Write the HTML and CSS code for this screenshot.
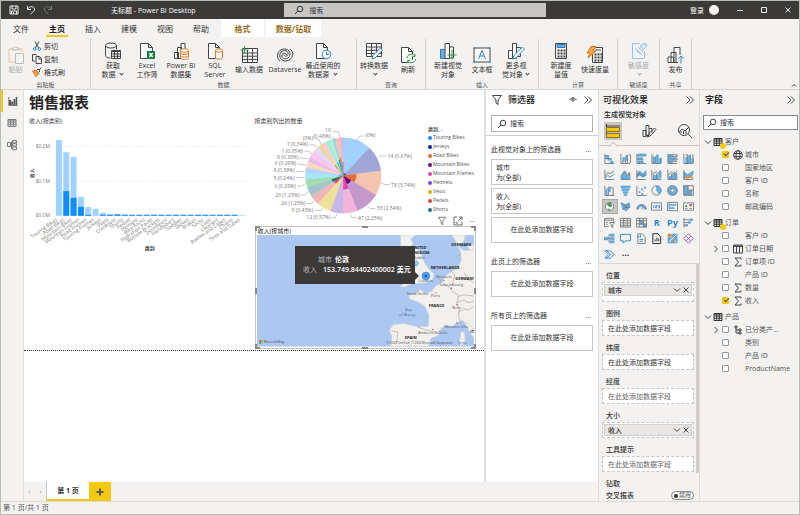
FILE: index.html
```html
<!DOCTYPE html>
<html lang="zh-CN">
<head>
<meta charset="utf-8">
<title>无标题 - Power BI Desktop</title>
<link rel="stylesheet" href="styles.css">
</head>
<body>
<svg class="sprite" aria-hidden="true">
  <symbol id="lens" viewBox="0 0 10 10"><circle cx="6" cy="4" r="2.8"/><path d="M4 6 1 9"/></symbol>
  <symbol id="down" viewBox="0 0 8 8"><path d="M1 2.5 4 5.5 7 2.5"/></symbol>
  <symbol id="right" viewBox="0 0 8 8"><path d="M2.5 1 5.5 4 2.5 7"/></symbol>
  <symbol id="close" viewBox="0 0 8 8"><path d="M1.5 1.5l5 5M6.5 1.5l-5 5"/></symbol>
  <symbol id="expand" viewBox="0 0 10 10"><path d="M1.500 1.500 5 5 1.500 8.500M5 1.500 8.500 5 5 8.500"/></symbol>
  <symbol id="funnel" viewBox="0 0 12 12"><path d="M1.500 1.500h9L7 6v4.500L5 9V6z"/></symbol>
  <symbol id="table" viewBox="0 0 10 10"><path d="M1 1.500h8v7H1zM1 4h8M1 6.200h8M3.700 1.500v7M6.300 1.500v7M1 2h8"/></symbol>
  <symbol id="sum" viewBox="0 0 10 10"><path d="M8 2.500V1H2l3.500 4L2 9h6V7.500"/></symbol>
</svg>

<header class="titlebar">
  <div class="title-left">
    <button class="plain" aria-label="保存"><svg class="i10" viewBox="0 0 10 10"><path d="M1 1h8v8H1zM3 1v3h4V1M2.500 9V6h5v3M4.500 7v2"/></svg></button>
    <button class="plain" aria-label="撤消"><svg class="i10" viewBox="0 0 10 10"><path d="M1.500 1v3.500H5M1.500 4.500C3 1 8 .5 8.500 4 8.700 6 7 7 4.500 9"/></svg></button>
    <button class="plain dim" aria-label="恢复"><svg class="i10" viewBox="0 0 10 10"><path d="M8.500 1v3.500H5M8.500 4.500C7 1 2 .5 1.500 4 1.300 6 3 7 5.500 9"/></svg></button>
    <span class="doc-title">无标题 - Power BI Desktop</span>
  </div>
  <label class="top-search"><svg class="i10"><use href="#lens"/></svg><input type="text" placeholder="搜索" aria-label="搜索"></label>
  <div class="title-right">
    <button class="plain sign">登录<span class="avatar"></span></button>
    <button class="plain" aria-label="最小化"><svg class="i8" viewBox="0 0 8 8"><path d="M1 4.500h6"/></svg></button>
    <button class="plain" aria-label="最大化"><svg class="i8" viewBox="0 0 8 8"><path d="M1.500 1.500h5v5h-5z"/></svg></button>
    <button class="plain" aria-label="关闭"><svg class="i8"><use href="#close"/></svg></button>
  </div>
</header>

<nav class="tabs">
  <button>文件</button><button class="active">主页</button><button>插入</button><button>建模</button><button>视图</button><button>帮助</button><button class="context">格式</button><button class="context long">数据/钻取</button>
</nav>

<section class="ribbon">
  <div class="group clip">
    <div class="tools">
      <button class="tool paste"><svg viewBox="0 0 18 18"><path class="or" d="M5 3H2v13h6M12 3h3v3"/><path d="M5 4V2h2c0-1.500 3-1.500 3 0h2v2zM8.500 7.500h8v10h-8z"/></svg>粘贴</button>
      <div class="small-tools">
        <button><svg class="i10" viewBox="0 0 10 10"><path d="M3 .5 6.700 7M7 .5 3.300 7"/><g class="bl"><circle cx="2.700" cy="8" r="1.300"/><circle cx="7.300" cy="8" r="1.300"/></g></svg>剪切</button>
        <button><svg class="i10" viewBox="0 0 10 10"><path d="M3 7H.5V.5H4l1 1M4 2.500h3.500l2 2v5H4zM7 2.500V5h2.500"/></svg>复制</button>
        <button><svg class="i10" viewBox="0 0 10 10"><path class="fo" d="M.5 4 4 3l3 3.500L4 9.500z"/><path d="M4.500 3.500 6 2l2 2-1.500 1.500M7 3l2.500-2.500"/></svg>格式刷</button>
      </div>
    </div>
    <span class="caption">剪贴板</span>
  </div>
  <div class="group">
    <div class="tools inset">
      <button class="tool"><svg viewBox="0 0 18 18"><ellipse cx="7" cy="3.500" rx="5.500" ry="2.500"/><path d="M1.500 3.500v10c0 1.500 2 2.500 5 2.500M12.500 3.500V7"/><path class="w" d="M7.500 8.500h9v8h-9z"/><path d="M7.500 9.500h9M7.500 12h9M7.500 14.300h9M10.500 9v7.500M13.500 9v7.500"/></svg>获取<br>数据 <i class="caret"></i></button>
      <button class="tool"><svg viewBox="0 0 18 18"><path class="w" d="M2.500 1.500h8l4 4v11h-12zM10.500 1.500v4h4"/><path class="fg" d="M9 9h8v8H9z"/><path class="ws" d="M11.300 11l3.500 4M14.800 11l-3.500 4"/></svg>Excel<br>工作簿</button>
      <button class="tool"><svg viewBox="0 0 18 18"><path class="w" d="M2.500 10.500h4v6h-4zM5.500 5.500h4v11h-4zM9 1.500h4v12H9z"/><g class="or w"><path d="M8.500 8.500v7c0 2.500 8 2.500 8 0v-7"/><ellipse cx="12.500" cy="8.500" rx="4" ry="1.800"/><path d="M8.500 11c0 2 8 2 8 0M8.500 13.500c0 2 8 2 8 0"/></g></svg>Power BI<br>数据集</button>
      <button class="tool"><svg viewBox="0 0 18 18"><path class="w" d="M2.500 1.500h7l4 4v11h-11zM9.500 1.500v4h4"/><g class="or w"><path d="M9.500 8.500v7c0 2.300 7 2.300 7 0v-7"/><ellipse cx="13" cy="8.500" rx="3.500" ry="1.700"/></g></svg>SQL<br>Server</button>
      <button class="tool"><svg viewBox="0 0 18 18"><path class="w" d="M2.500 2.500h15v14h-15zM2.500 7h15M2.500 10.200h15M2.500 13.400h15M7.500 4v12.500M12.500 2.500v14"/><path class="gr" d="M4.500 0v8M.5 4h8"/></svg>输入数据</button>
      <button class="tool wide"><svg viewBox="0 0 18 18"><path d="M4 15C-1 11 2 3 8 3c6-.5 8 6 4 9-3 2-7 0-6-3 .5-2 4-2.500 4.500 0M14 3c5 3 3 11-4 12-5 .5-8-5-5-9 3-3 8-1 7 2.500-.5 2.500-4 2-4 0"/></svg>Dataverse</button>
      <button class="tool wide"><svg viewBox="0 0 18 18"><path class="w" d="M2.500 1.500h7l4 4v11h-11zM9.500 1.500v4h4"/><g class="bl w"><circle cx="12.500" cy="12.500" r="4.300"/><path d="M12.500 9.500v3h3"/></g></svg>最近使用的<br>数据源 <i class="caret"></i></button>
    </div>
    <span class="caption">数据</span>
  </div>
  <div class="group">
    <div class="tools">
      <button class="tool"><svg viewBox="0 0 18 18"><path class="w" d="M1.500 1.500h15v13h-15zM1.500 5h15M1.500 8.300h15M1.500 11.500h15M6.500 1.500v13M11.500 1.500v13"/><path class="bl w" d="M7 17l1-3.500L15.500 6l2 2L10 16z"/></svg>转换数据<br><i class="caret"></i></button>
      <button class="tool"><svg viewBox="0 0 18 18"><path class="w" d="M2.500 1.500h7l4 4v11h-11zM9.500 1.500v4h4"/><path class="gr w" d="M8 12c0-4 6-5 8-2M16 8v2.500h-2.500M16.500 13c0 4-6 5-8 2M8.500 17v-2.500H11"/></svg>刷新</button>
    </div>
    <span class="caption">查询</span>
  </div>
  <div class="group">
    <div class="tools inset">
      <button class="tool"><svg viewBox="0 0 18 18"><path class="fb" d="M1.500 7.500h5v9h-5z"/><path class="w" d="M6 1.500h4.500v15H6zM10.500 5h4v11h-4z"/><path class="gr" d="M13 8v9.500M8.500 13h9"/></svg>新建视觉<br>对象</button>
      <button class="tool"><svg viewBox="0 0 18 18"><path class="w" d="M1 2h16v14H1z"/><path class="bl" d="M5.500 13 9 4.500 12.500 13M6.700 10h4.600M0 2h2M16 2h2M0 16h2M16 16h2"/></svg>文本框</button>
      <button class="tool"><svg viewBox="0 0 18 18"><path class="w" d="M1.500 8.500h4v8h-4zM5.500 1.500h4v15h-4zM9.500 5.500h4v9h-4z"/><path class="bl w" d="M6 17l1-3.500L15.500 5l2 2L9 16z"/></svg>更多视<br>觉对象<i class="caret"></i></button>
    </div>
    <span class="caption">插入</span>
  </div>
  <div class="group">
    <div class="tools">
      <button class="tool"><svg viewBox="0 0 18 18"><path class="w" d="M3.500 1.500h11v15h-11z"/><path class="fb" d="M5 2.500h8v3H5z"/><path class="dot" d="M5.500 8.500h8M5.500 11.500h8M5.500 14.500h8"/></svg>新建度<br>量值</button>
      <button class="tool"><svg viewBox="0 0 18 18"><path class="w" d="M6.500 1.500h10v15h-10z"/><path class="dot" d="M8.500 8.500h8M8.500 11.500h8M8.500 14.500h8"/><path d="M9 4h6"/><path class="fo" d="M5 .5h5L7 5h3L2 12l2-5H1z"/></svg>快速度量</button>
    </div>
    <span class="caption">计算</span>
  </div>
  <div class="group">
    <div class="tools">
      <button class="tool off"><svg viewBox="0 0 18 18"><path d="M10 1.500H2.500v15h12V9"/><path d="M8 5l5 5M6 8l4 4M5 6l7 7M10 4l5-3 2 3-4 4zM11 6l5-4"/></svg>敏感度<br><i class="caret"></i></button>
    </div>
    <span class="caption">敏感度</span>
  </div>
  <div class="group">
    <div class="tools">
      <button class="tool"><svg viewBox="0 0 18 18"><path class="w" d="M7 1.500h6v15H7zM4 6.500h5v10H4zM1 11h5.500v5.500H1z"/><path class="w none" d="M11 9h7v9h-7z"/><path class="bl" d="M14 17.500V10M11.500 12.500 14 10l2.500 2.500"/></svg>发布</button>
    </div>
    <span class="caption">共享</span>
  </div>
  <button class="plain collapse" aria-label="折叠功能区"><svg class="i8" viewBox="0 0 8 8"><path d="M2 5.500 4 3.500 6 5.500"/></svg></button>
</section>

<main class="workspace">
  <nav class="rail">
    <button class="on" aria-label="报表"><svg class="i10" viewBox="0 0 10 10"><path class="fd" d="M1 4h2v5H1zM3.300 5.500h1.800V9H3.300zM5.500 3h1.800v6H5.500zM7.700 1h1.500v8H7.700z"/><path d="M.8 1v8.500h8.700"/></svg></button>
    <button aria-label="数据"><svg class="i10"><use href="#table"/></svg></button>
    <button aria-label="模型"><svg class="i10" viewBox="0 0 10 10"><path d="M5.500.5h4v2.500h-4zM5.500 3.700h4v2.300h-4zM5.500 7h4v2.500h-4zM.5 2.500h3v4h-3zM3.500 4.500h2M4.500 2v6.500h1M4.500 2h1"/></svg></button>
  </nav>

  <div class="work">
    <div class="stage">
      <div class="report">
        <h1>销售报表</h1>
        <div class="visuals">
          <section class="visual">
            <h2>收入(按类别)</h2>
            <svg id="bars" class="chart" viewBox="84 105 666 380"></svg>
          </section>
          <div class="stack">
            <section class="visual">
              <h2>按类别列出的数量</h2>
              <div class="pie-row">
                <svg id="pie" class="chart" viewBox="30 108 515 286"></svg>
                <div class="legend">
                  <b>类别_ .</b>
                  <ul id="legend"></ul>
                </div>
              </div>
            </section>
            <section class="visual map-visual">
              <div class="visual-actions">
                <button class="plain" aria-label="筛选器"><svg class="i10"><use href="#funnel"/></svg></button>
                <button class="plain" aria-label="焦点模式"><svg class="i10" viewBox="0 0 10 10"><path d="M4 1H1v8h8V6M5 5l4-4M6 1h3v3M3 6v1h2"/></svg></button>
                <button class="plain" aria-label="更多选项">···</button>
              </div>
              <div class="map-frame">
                <h2>收入(按城市)</h2>
                <svg class="chart map" viewBox="32 45 658 337">
                  <path class="sea" d="M32 45h658v337H32z"/>
                  <path class="land" d="M466 45h46l-14 12 6 14-8 12 22 4 14 22 8 22 14 18 14 14-4 16-16 10-24 2-26 2-20 10-12-2 20-20-6-10 10-20-10-30-14-30z"/>
                  <path class="land" d="M622 45h40l-4 18-14 18 14 12 32-6v244l-24-14-12-14-16 6-14 12-26-1-12 12-6 18-22 8-6 24H436l4-30-8-18 12-18 34-3 44 10 28-2 2-34-12-26-18-12-28-10-4-12 24-4 6-12 12 2 8 10 20-8 12-16 20-10 12-22 20-14 16-8 10-24-4-30z"/>
                  <path class="land" d="M650 336l10 4 2 28-12 14-6-16zM668 78l18-6 4 14-14 6zM660 310l14 4 16 22v24l-14-20z"/>
                  <path class="border" d="M582 176l14 18 18 8 10 14 18 12-6 26 8 16-2 20 6 24M518 324l26 8 32 8 14 4M614 150l16 14-6 34M636 110l14-8M636 250l20-8 18 8 16-6M640 280l18-12 14 4 18-12M640 232l16-6 34 4M438 335l20 4-4 34M660 160l10 20 20 10"/>
                  <g class="country"><text x="522" y="88">UNITED</text><text x="524" y="103">KINGDOM</text><text x="650" y="77">DENMARK</text><text x="601" y="147">NETHERLANDS</text><text x="662" y="181">GERMANY</text><text x="575" y="263">FRANCE</text><text x="497" y="360">SPAIN</text><text x="683" y="340">IT</text></g>
                  <g class="city"><text x="522" y="119">Dublin</text><text x="543" y="188">London</text><text x="598" y="174">Brussels</text><text x="620" y="200">Luxembourg</text><text x="518" y="228">Saint-Helier</text><text x="572" y="234">Paris</text><text x="636" y="270">Bern</text><text x="636" y="325">Monaco-Ville</text><text x="564" y="345">Andorra la Vella</text></g>
                  <g class="water"><text x="490" y="275">Bay</text><text x="486" y="289">of Biscay</text></g>
                  <g class="pins"><circle cx="598" cy="183" r="2"/><circle cx="620" cy="206" r="2"/><circle cx="519" cy="214" r="2"/><circle cx="573" cy="220" r="2"/><circle cx="637" cy="256" r="2"/><circle cx="637" cy="311" r="2"/><circle cx="564" cy="331" r="2"/></g>
                  <circle class="bubble light" cx="512" cy="131" r="8"/><circle class="bubble" cx="543" cy="169" r="12"/><circle class="bubble-core" cx="543" cy="169" r="4"/>
                  <path fill="#f25022" stroke="none" d="M39 363h5v5h-5z"/><path fill="#7fba00" stroke="none" d="M45 363h5v5h-5z"/><path fill="#00a4ef" stroke="none" d="M39 369h5v5h-5z"/><path fill="#ffb900" stroke="none" d="M45 369h5v5h-5z"/>
                  <text class="credit" x="53" y="373">Microsoft Bing</text>
                  <text class="credit" x="424" y="376">© 2022 TomTom, © 2022 Microsoft Corporation</text><text class="credit link" x="640" y="376">Terms</text>
                </svg>
                <i class="handle tl"></i><i class="handle tc"></i><i class="handle tr"></i><i class="handle ml"></i><i class="handle mr"></i><i class="handle bl-h"></i><i class="handle bc"></i><i class="handle br"></i>
                <div class="tooltip"><p class="indent"><span>城市</span><b>伦敦</b></p><p><span>收入</span><b>153.749.84402400002 美元</b></p></div>
              </div>
            </section>
          </div>
        </div>
      </div>

      <aside class="filters">
        <div class="pane-head"><svg class="i12 dark"><use href="#funnel"/></svg><h2>筛选器</h2><button class="plain push" aria-label="显示"><svg class="i10" viewBox="0 0 10 10"><path d="M1.500 5c2-3 5-3 7 0"/><circle cx="5" cy="5" r="1.200"/></svg></button><button class="plain" aria-label="折叠"><svg class="i10"><use href="#expand"/></svg></button></div>
        <label class="search"><svg class="i10"><use href="#lens"/></svg><input type="text" placeholder="搜索" aria-label="搜索筛选器"></label>
        <section class="filter-set first"><h3>此视觉对象上的筛选器<button class="plain">...</button></h3><div class="card">城市<br>为(全部)</div><div class="card">收入<br>为(全部)</div><div class="card drop">在此处添加数据字段</div></section>
        <section class="filter-set"><h3>此页上的筛选器<button class="plain">...</button></h3><div class="card drop">在此处添加数据字段</div></section>
        <section class="filter-set"><h3>所有页上的筛选器<button class="plain">...</button></h3><div class="card drop">在此处添加数据字段</div></section>
      </aside>
    </div>
    <footer class="pages"><button class="arrow" aria-label="上一页">‹</button><button class="arrow" aria-label="下一页">›</button><button class="page">第 1 页</button><button class="add" aria-label="新建页"><svg class="i10" viewBox="0 0 10 10"><path d="M5 1.500v7M1.500 5h7"/></svg></button></footer>
  </div>

  <aside class="viz">
    <div class="pane-head"><h2>可视化效果</h2><button class="plain push" aria-label="折叠"><svg class="i10"><use href="#expand"/></svg></button></div>
    <h3 class="build">生成视觉对象</h3>
    <div class="modes">
      <button class="on" aria-label="字段"><svg viewBox="0 0 16 16"><path d="M1.500 1v14M1 3h14"/><path class="fy" d="M1.500 4.500h13v4h-13zM1.500 10.500h13v4h-13z"/></svg></button>
      <button aria-label="格式"><svg viewBox="0 0 16 16"><path d="M2 7.500h3v6H2zM5 2.500h3v10H5zM8 5.500h3v4M6 14l1.500-3L13.500 5l1.500 1.500L9 13z"/></svg></button>
      <button aria-label="分析"><svg viewBox="0 0 16 16"><circle cx="7" cy="7" r="5.500"/><path d="M11 11l4 4M2 9l3-3 3 2 4-4M4 10V8M6.500 11V8M9 11V8"/></svg></button>
    </div>
    <div class="gallery">
      <button aria-label="堆积条形图"><svg viewBox="0 0 12 12"><path d="M1 1v10.500h10M1 3h4v2M1 6h7v2"/><path class="b" d="M2 3h3v2H2zM4 6h3v2H4zM7 9h3v2H7z"/></svg></button>
      <button aria-label="堆积柱形图"><svg viewBox="0 0 12 12"><path d="M1 1v10.500h10M9.500 2h2v9"/><path class="b" d="M3 5h2v4H3zM6 3h2v5H6z"/><path d="M3 9v2M6 8v3M8 2v9"/></svg></button>
      <button aria-label="簇状条形图"><svg viewBox="0 0 12 12"><path d="M1 1v10.500h10M1 3h10M1 7h7"/><path class="b" d="M2 1h9v2H2zM2 5h5v2H2zM2 8.500h6v2H2z"/></svg></button>
      <button aria-label="簇状柱形图"><svg viewBox="0 0 12 12"><path d="M1 1v10.500h10M5 4v7M11 5v6"/><path class="b" d="M2 4h2v7H2zM6 2h2v9H6zM9 6h2v5H9z"/></svg></button>
      <button aria-label="百分比堆积条形图"><svg viewBox="0 0 12 12"><path d="M1 1v10.500h10M1 2h10v2H1M1 5.500h10v2H1M1 9h10"/><path class="b" d="M2 2h4v2H2zM2 5.500h7v2H2zM2 9h4v2H2z"/></svg></button>
      <button aria-label="百分比堆积柱形图"><svg viewBox="0 0 12 12"><path d="M1 1v10.500h10M3 2h2v9M7 2h1v9M10 2h1v9"/><path class="b" d="M3 5h2v6H3zM6 3h2v8H6zM9.500 6h1.500v5H9.500z"/></svg></button>
      <button aria-label="折线图"><svg viewBox="0 0 12 12"><path d="M1 1v10.500h10M1 8l3-4 3 1 4-3"/><path class="s" d="M1 10l3-3 3 2 4-4"/></svg></button>
      <button aria-label="面积图"><svg viewBox="0 0 12 12"><path class="b" d="M1 11V8l4-5 3 5 2-3 1 6z"/><path d="M1 11.500h10M1 8l4-6 3 5 2-3 1 4"/></svg></button>
      <button aria-label="堆积面积图"><svg viewBox="0 0 12 12"><path class="b" d="M1 9V5l3-3 3 3 4-3v5L8 9 4 7z"/><path d="M1 1v10.500h10M1 7l3-2 3 3 4-3"/></svg></button>
      <button aria-label="折线和堆积柱形图"><svg viewBox="0 0 12 12"><path d="M1 1v10.500h10M3 6v5M6 5v6M10 1v10M2 5l4-2 4 3"/><path class="b" d="M3 7h2v4H3zM6 6h2v5H6zM9 3h2v6H9z"/></svg></button>
      <button aria-label="折线和簇状柱形图"><svg viewBox="0 0 12 12"><path d="M1 1v10.500h10M5 5v6M8 3v8M1 7l4-4 3 3 3-4"/><path class="b" d="M2 8h2v3H2zM5 6h2v5H5zM9 5h2v6H9z"/></svg></button>
      <button aria-label="功能区图"><svg viewBox="0 0 12 12"><path class="b" d="M1 3l4 3 3-2 3-2v4L8 9 5 8 1 11z"/><path class="o" d="M1 7l4 2 3-3 3 3v2L8 9l-3 2-4-2z"/><path d="M1 1v10.500h10"/></svg></button>
      <button aria-label="瀑布图"><svg viewBox="0 0 12 12"><path d="M1 1v10.500h10M3 4h2v7M7 3h3v8H8"/><path class="b" d="M2 5h1.500v6H2zM5 2h2v5H5z"/></svg></button>
      <button aria-label="漏斗图"><svg viewBox="0 0 12 12"><path class="b" d="M1 1h10v2H1zM2 4h8v2H2zM3.500 7h5v2h-5zM4.500 10h3v1.500h-3z"/></svg></button>
      <button aria-label="散点图"><svg viewBox="0 0 12 12"><path d="M1 1v10.500h10M4 4h.5M8 7h.5"/><path class="b" d="M3 7h1.500v1.500H3zM6 4h1.500v1.500H6zM9 2h1.500v1.500H9zM6 9h1.500v1.500H6z"/></svg></button>
      <button aria-label="饼图"><svg viewBox="0 0 12 12"><circle cx="6" cy="6" r="5"/><path class="b" d="M6 6V1a5 5 0 0 1 3 9z"/></svg></button>
      <button aria-label="圆环图"><svg viewBox="0 0 12 12"><circle class="ring" cx="6" cy="6" r="3.800"/><circle cx="6" cy="6" r="5.300"/><circle class="hole" cx="6" cy="6" r="2"/></svg></button>
      <button aria-label="树状图"><svg viewBox="0 0 12 12"><path class="b" d="M1 1h4v10H1zM6 6h3v5H6z"/><path d="M.8.800h10.400v10.400H.8zM5.500 1v10M5.500 5.500H11M9 5.500V11"/></svg></button>
      <button class="on" aria-label="地图"><svg viewBox="0 0 12 12"><circle class="w" cx="6" cy="6" r="4.500"/><path class="e" d="M3 3l4-1 2 3-2 2-3-2zM4 8l3 1-1 2z"/></svg></button>
      <button aria-label="着色地图"><svg viewBox="0 0 12 12"><path class="b" d="M1 2l4 2 5-2 1 4-4 5-4-2z"/><path d="M1 2l4 2 1 3 4-5M6 7l5 0M3 9l3-2"/></svg></button>
      <button aria-label="仪表"><svg viewBox="0 0 12 12"><path class="b" d="M1 9a5 5 0 0 1 10 0H9a3 3 0 0 0-6 0z"/><path d="M1 9a5 5 0 0 1 10 0M6 9l2-3"/></svg></button>
      <button aria-label="卡片图"><svg viewBox="0 0 12 12"><path class="w" d="M.5 2h11v8H.5z"/><path class="s" d="M3 4.500v3M5 4.500h1.500v1.500H5v1.500h1.500M8 4.500h1.500v3H8M8 6h1.500"/></svg></button>
      <button aria-label="多行卡"><svg viewBox="0 0 12 12"><path class="w" d="M.5 1.500h11v9H.5z"/><path class="b" d="M2 3h1v6H2zM4 3.500h6V5H4zM4 7h4v1.500H4z"/></svg></button>
      <button aria-label="KPI"><svg viewBox="0 0 12 12"><path class="w" d="M.5 2h11v8H.5z"/><path class="e" d="M2 6.500l1.500-3L5 6.500z"/><path class="r" d="M6.500 3.500h4l-2 3z"/><path d="M2 8h3M7 8h3"/></svg></button>
      <button aria-label="切片器"><svg viewBox="0 0 12 12"><path d="M5 10.500H.500v-9h10V5M.5 3.500h10M2 6h2M2 8h2M6 6h5.500L9.500 8.500v3l-1.500-1v-2z"/></svg></button>
      <button aria-label="表"><svg viewBox="0 0 12 12"><path class="w" d="M.5 1.500h11v9.500H.5zM.5 4h11M.5 6.500h11M.5 9h11M4 1.500V11M8 1.500V11"/></svg></button>
      <button aria-label="矩阵"><svg viewBox="0 0 12 12"><path class="b" d="M4 4h4v4H4zM8 8h3v3H8z"/><path d="M.5 1.500h11v9.500H.5zM.5 4h11M.5 7.500h11M4 1.500V11M8 1.500V11"/></svg></button>
      <button class="word" aria-label="R 脚本">R</button>
      <button class="word" aria-label="Python">Py</button>
      <button aria-label="关键影响因素"><svg viewBox="0 0 12 12"><path d="M1 1v10.500M1 3h10M1 6h7M1 9h4"/><path class="b" d="M8 2h2v2H8zM6 5h2v2H6zM3 8h2v2H3z"/></svg></button>
      <button aria-label="分解树"><svg viewBox="0 0 12 12"><path class="b" d="M0 4.500h4v3H0zM7 1h4v2.500H7zM7 4.800h4v2.500H7zM7 8.500h4V11H7z"/><path d="M4 6h3M5.500 2v8H7M5.500 2H7"/></svg></button>
      <button aria-label="问答"><svg viewBox="0 0 12 12"><path class="s" d="M.5 1.500h11v7H6L3.500 11V8.500h-3z"/></svg></button>
      <button aria-label="智能叙述"><svg viewBox="0 0 12 12"><path d="M2 1h5l3 3v7.500H2z"/><path class="s" d="M4 7h4M4 9h3M1 4h3M5 2v3"/></svg></button>
      <button aria-label="分页报表"><svg viewBox="0 0 12 12"><path class="k" d="M2 .8h5.500L10.500 4v7.500H2zM4.500 9V7M6.500 9V5M8.500 9V6"/></svg></button>
      <button aria-label="ArcGIS"><svg viewBox="0 0 12 12"><path class="b" d="M1 5h4V1h6v10H1z"/><path class="wl" d="M2 10l8-8M5 5l5 5"/><circle class="o" cx="2.500" cy="2.500" r="2"/><circle class="o" cx="7" cy="8" r="1.500"/></svg></button>
      <button aria-label="Power Apps"><svg viewBox="0 0 12 12"><path class="p" d="M6 .8 11.200 6 6 11.200.8 6zM3.500 3.500l5 5M8.500 3.500l-5 5"/></svg></button>
      <button aria-label="Power Automate"><svg viewBox="0 0 12 12"><path class="s" d="M1 2h6l4 4-4 4H1l4-4zM3 2l4 4-4 4"/></svg></button>
      <button class="more" aria-label="更多">···</button>
    </div>
    <div class="wells">
      <section><h3>位置</h3><div class="well full"><div class="pill">城市<svg class="i8"><use href="#down"/></svg><svg class="i8"><use href="#close"/></svg></div></div></section>
      <section><h3>图例</h3><div class="well">在此处添加数据字段</div></section>
      <section><h3>纬度</h3><div class="well">在此处添加数据字段</div></section>
      <section><h3>经度</h3><div class="well soft">在此处添加数据字段</div></section>
      <section><h3>大小</h3><div class="well"><div class="pill">收入<svg class="i8"><use href="#down"/></svg><svg class="i8"><use href="#close"/></svg></div></div></section>
      <section><h3>工具提示</h3><div class="well soft">在此处添加数据字段</div></section>
      <section><h3>钻取</h3><label class="cross">交叉报表<span class="switch"><input type="checkbox">禁用</span></label></section>
    </div>
  </aside>

  <aside class="fields">
    <div class="pane-head"><h2>字段</h2><button class="plain push" aria-label="折叠"><svg class="i10"><use href="#expand"/></svg></button></div>
    <label class="search"><svg class="i10"><use href="#lens"/></svg><input type="text" placeholder="搜索" aria-label="搜索字段"></label>
    <section class="entity used"><h3><svg class="i8"><use href="#down"/></svg><span class="tbl"><svg class="i10"><use href="#table"/></svg></span>客户</h3>
      <label><i></i><input type="checkbox" checked><svg class="i10" viewBox="0 0 10 10"><circle cx="5" cy="5" r="4.300"/><ellipse cx="5" cy="5" rx="2" ry="4.300"/><path d="M1 3.500h8M1 6.500h8"/></svg>城市</label>
      <label><i></i><input type="checkbox"><i class="type"></i>国家地区</label>
      <label><i></i><input type="checkbox"><i class="type"></i>客户 ID</label>
      <label><i></i><input type="checkbox"><i class="type"></i>名称</label>
      <label><i></i><input type="checkbox"><i class="type"></i>邮政编码</label></section>
    <section class="entity used"><h3><svg class="i8"><use href="#down"/></svg><span class="tbl"><svg class="i10"><use href="#table"/></svg></span>订单</h3>
      <label><i></i><input type="checkbox"><i class="type"></i>客户 ID</label>
      <label><svg class="i8"><use href="#right"/></svg><input type="checkbox"><svg class="i10" viewBox="0 0 10 10"><path d="M.5 1h9v8h-9zM.5 2.500h9M3.500 3v6M6.500 3v6M.5 2h9"/></svg>订单日期</label>
      <label><i></i><input type="checkbox"><svg class="i10"><use href="#sum"/></svg>订单项 ID</label>
      <label><i></i><input type="checkbox"><i class="type"></i>产品 ID</label>
      <label><i></i><input type="checkbox"><svg class="i10"><use href="#sum"/></svg>数量</label>
      <label><i></i><input type="checkbox" checked><svg class="i10"><use href="#sum"/></svg>收入</label></section>
    <section class="entity"><h3><svg class="i8"><use href="#down"/></svg><span class="tbl"><svg class="i10"><use href="#table"/></svg></span>产品</h3>
      <label><svg class="i8"><use href="#right"/></svg><input type="checkbox"><svg class="i10" viewBox="0 0 10 10"><path d="M2 1h2v2H2zM3 3v5h3M3 5h3M6 4h2v2H6zM6 7h2v2H6z"/></svg>已分类产...</label>
      <label><i></i><input type="checkbox"><i class="type"></i>类别</label>
      <label><i></i><input type="checkbox"><i class="type"></i>产品 ID</label>
      <label><i></i><input type="checkbox"><i class="type"></i>ProductName</label></section>
  </aside>
</main>
<footer class="status">第 1 页/共 1 页</footer>
<script src="charts.js"></script>
</body>
</html>
```
FILE: styles.css
```css
* { box-sizing: border-box; margin: 0; padding: 0; }
body {
  display: flex; flex-direction: column; min-height: 100vh;
  border: 1px solid #b9bdb9; background: #f3f2f1; color: #333;
  font: 7px/9px "Open Sans", "Noto Sans CJK SC", sans-serif;
}
button, input { font: inherit; color: inherit; border: 0; background: none; }
button { white-space: nowrap; }
h1, h2, h3 { font-size: 7px; font-weight: 400; }
ul { list-style: none; }
i { font-style: normal; }
svg { display: block; flex: none; fill: none; stroke: #444; stroke-width: 1; }
svg text { stroke: none; }
.sprite { width: 0; height: 0; position: absolute; }
.i8 { width: 8px; height: 8px; }
.i10 { width: 10px; height: 10px; }
.i12 { width: 12px; height: 12px; }
.plain { display: flex; align-items: center; justify-content: center; }

.titlebar { display: grid; grid-template-columns: 284fr 262fr 254fr; align-items: center; height: 18px; background: #3b3a39; color: #fff; }
.titlebar svg { stroke: #eee; }
.title-left { display: flex; align-items: center; gap: 7px; padding-left: 8px; }
.title-left .dim { opacity: .35; }
.doc-title { margin-left: 51px; white-space: nowrap; }
.top-search { display: flex; align-items: center; gap: 5px; height: 14px; padding-left: 10px; background: #c8c6c4; }
.top-search svg { stroke: #333; }
input[type="text"] { flex: 1; min-width: 0; outline: 0; }
input::placeholder { color: #33384f; opacity: 1; }
.title-right { display: flex; align-items: center; justify-content: flex-end; gap: 16px; padding-right: 7px; }
.sign { gap: 5px; margin-right: 1px; }
.avatar { width: 10px; height: 10px; border-radius: 50%; background: #f3f2f1; }

.tabs { display: flex; height: 18px; padding-left: 2px; font-size: 8px; }
.tabs button { width: 36px; position: relative; }
.tabs .active { font-weight: 700; color: #222; }
.tabs .active::after { content: ""; position: absolute; left: 7px; right: 7px; bottom: 0; height: 2px; background: #f2c811; }
.tabs .context { width: 43px; margin-left: 2px; background: #fff; color: #96701d; font-weight: 700; }
.tabs .long { width: 55px; }

.ribbon { display: grid; grid-template-columns: 90px 266px 69px 113px 79px 42px 32px 1fr; height: 53px; padding-top: 2px; border-bottom: 1px solid #d8d6d4; }
.group { display: flex; flex-direction: column; justify-content: space-between; border-right: 1px solid #d2d0ce; }
.tools { display: flex; justify-content: center; align-items: flex-start; }
.tools.inset { justify-content: flex-start; padding-left: 5px; }
.tool { display: block; width: 34px; height: 40px; text-align: center; line-height: 9px; }
.tool.wide { width: 38px; }
.tool svg { width: 18px; height: 18px; margin: 2px auto 1px; }
.caption { text-align: center; font-size: 6px; line-height: 7px; color: #555; }
.caret { display: inline-block; width: 3px; height: 3px; margin: 0 1px 2px 3px; border: solid #444; border-width: 0 1px 1px 0; transform: rotate(45deg); }
.clip .tools { justify-content: flex-start; gap: 2px; }
.tool.paste { width: 29px; color: #aaa; }
.tool.paste svg { stroke: #bbb; margin-bottom: 1px; }
.paste .or { stroke: #efc49a; }
.small-tools { display: flex; flex-direction: column; gap: 3px; padding-top: 2px; }
.small-tools button { display: flex; align-items: center; gap: 2px; height: 10px; }
.w { fill: #faf9f8; }
.none { stroke: none; fill: #f3f2f1; }
.or { stroke: #e07a26; }
.bl { stroke: #2b88d8; }
.gr { stroke: #2e9e4f; }
.fg { fill: #107c41; stroke: none; }
.ws { stroke: #fff; stroke-width: 1.5; }
.fo { fill: #f6a540; stroke: #d9731a; }
.fb { fill: #69afe5; stroke: #2b7cc0; }
.fd { fill: #555; stroke: none; }
.dot { stroke-dasharray: 2 1; stroke-width: 2; }
.off { color: #aaa; }
.off svg { stroke: #94c4e8; }
.off .caret { border-color: #aaa; }
.collapse { place-self: end; margin-right: 1px; }

.workspace { flex: 1; display: grid; grid-template-columns: 23px 1fr 102px 99px; }
.rail { display: flex; flex-direction: column; border-right: 1px solid #e1dfdd; }
.rail button { display: flex; align-items: center; justify-content: center; height: 22px; }
.rail svg { stroke: #777; }
.rail .on { border-left: 2px solid #f2c811; }
.work { display: flex; flex-direction: column; min-width: 0; }
.stage { flex: 1; display: grid; grid-template-columns: 1fr 112px; background: #fff; }
.report { border-right: 2px solid #e1dfdd; min-width: 0; }
.report h1 { padding: 1px 0 0 5px; font-size: 15px; line-height: 22px; font-weight: 700; color: #252423; }
.visuals { display: grid; grid-template-columns: 1fr 1fr; gap: 4px; padding: 2px 8px 1px 5px; border-bottom: 1px dotted #333; }
.visual h2 { font-size: 6px; line-height: 9px; padding-top: 2px; color: #444; }
.chart { width: 100%; height: auto; }
.stack { display: flex; flex-direction: column; min-width: 0; }
.stack .visual { position: relative; }
.pie-row { display: flex; }
.pie-row .chart { flex: 1; min-width: 0; }
.legend { width: 48px; font-size: 5px; color: #555; }
.legend b { display: block; line-height: 7px; }
.legend li { display: flex; align-items: center; gap: 1px; line-height: 9px; white-space: nowrap; }
.legend li::before { content: ""; width: 4px; height: 4px; border-radius: 50%; background: var(--c); }
.axis, .callout { font-size: 15px; fill: #777; }
.axis.dark { fill: #444; font-weight: 700; }
.tick { font-size: 15px; fill: #777; text-anchor: end; }
.grid-line { stroke: #ccc; stroke-dasharray: 2 5; stroke-width: 2; }
.leader { stroke: #aaa; stroke-width: 2; }
.visual-actions { position: absolute; right: 1px; top: -10px; display: flex; gap: 6px; }
.visual-actions svg { stroke: #666; }
.map-frame { position: relative; padding: 0 1px 1px; border: 1px solid #c8c6c4; background: #fff; }
.visual.map-visual { margin-top: 4px; }
.map-frame h2 { padding-top: 0; line-height: 8px; padding-left: 1px; color: #222; }
.sea { fill: #abc7f2; stroke: none; }
.land { fill: #f1f0ec; stroke: #c9d0d6; stroke-width: 2; }
.border { stroke: #aaa5a5; stroke-width: 2; }
.country, .city, .water { text-anchor: middle; font-size: 12px; }
.country { font-weight: 700; fill: #222; }
.city { fill: #555; }
.water { fill: #3f68a8; }
.pins { fill: #e33; stroke: none; }
.bubble { fill: #2b8af0; stroke: #1b70cc; fill-opacity: .8; }
.bubble.light { fill: #8cc4f5; }
.bubble-core { fill: #0a5cc0; stroke: none; }
.credit { font-size: 9px; fill: #444; }
.credit.link { fill: #3f68a8; }
.handle { position: absolute; width: 5px; height: 5px; border: 0 solid #8a8886; }
.tl { left: -1px; top: -1px; border-width: 2px 0 0 2px; }
.tr { right: -1px; top: -1px; border-width: 2px 2px 0 0; }
.bl-h { left: -1px; bottom: -1px; border-width: 0 0 2px 2px; }
.br { right: -1px; bottom: -1px; border-width: 0 2px 2px 0; }
.tc, .bc { left: 50%; width: 6px; height: 2px; margin-left: -3px; background: #8a8886; }
.tc { top: -1px; }
.bc { bottom: -1px; }
.ml, .mr { top: 50%; width: 2px; height: 6px; background: #8a8886; }
.ml { left: -1px; }
.mr { right: -1px; }
.tooltip { position: absolute; left: 18%; top: 19px; width: 120px; padding: 9px 4px 9px 8px; background: #3b3a39; color: #fff; white-space: nowrap; }
.tooltip p { display: flex; gap: 6px; line-height: 10px; }
.tooltip .indent { padding-left: 15px; gap: 3px; }
.tooltip span { color: #bbb; }
.tooltip b { font-weight: 600; }
.tooltip::after { content: ""; position: absolute; left: 100%; top: 26px; border: 4px solid transparent; border-left-color: #3b3a39; border-right-width: 0; }

.pane-head { display: flex; align-items: center; height: 20px; }
.pane-head h2 { font-size: 9px; line-height: 12px; font-weight: 500; color: #222; }
.push { margin-left: auto; }
.search { display: flex; align-items: center; gap: 3px; height: 17px; padding-left: 5px; border: 1px solid #b3b0ad; background: #fff; }
.filters { padding: 0 5px; }
.filters .pane-head { gap: 5px; }
.filters .search { margin-top: 5px; }
.filter-set { display: flex; flex-direction: column; gap: 3px; margin-top: 8px; }
.filter-set h3 { display: flex; justify-content: space-between; align-items: center; height: 20px; padding-right: 2px; margin-bottom: -3px; }
.filter-set.first { margin: 3px -5px 0; padding: 3px 5px 0; border-top: 1px solid #d2d0ce; }
.card { height: 26px; padding: 3px 4px; border: 1px solid #c8c6c4; background: #fff; line-height: 10px; }
.card.drop { display: flex; align-items: center; justify-content: center; }

.pages { display: flex; height: 19px; }
.arrow { width: 11px; color: #999; }
.page { width: 43px; background: #fff; border-left: 1px solid #c8c6c4; border-bottom: 2px solid #f2c811; font-weight: 700; }
.add { display: grid; place-items: center; width: 22px; background: #f2c811; }
.add svg { stroke: #5c5a55; stroke-width: 2; }

.viz { display: flex; flex-direction: column; border: solid #dddbd9; border-width: 0 1px; }
.viz .pane-head { padding: 0 4px; }
.build { padding-left: 5px; line-height: 10px; font-weight: 500; color: #222; }
.modes { display: flex; justify-content: space-between; height: 26px; padding: 2px 5px 0; border-bottom: 1px solid #c8c6c4; }
.modes button { display: grid; place-items: center; width: 18px; height: 18px; position: relative; }
.modes svg { width: 16px; height: 16px; }
.modes .on { background: #c8c6c4; }
.modes .on::after { content: ""; position: absolute; top: 21px; left: 6px; width: 6px; height: 6px; border: solid #c8c6c4; border-width: 1px 0 0 1px; background: #f3f2f1; transform: rotate(45deg); }
.fy { fill: #f2c811; stroke: #8b721a; }
.gallery { display: grid; grid-template-columns: repeat(6, 1fr); grid-auto-rows: 15px; row-gap: 1px; padding: 5px 3px 1px; border-bottom: 1px solid #d8d6d4; }
.gallery button { display: grid; place-items: center; }
.gallery svg { width: 11px; height: 11px; stroke: #777; }
.gallery .on { background: #c8c6c4; outline: 1px solid #aaa; outline-offset: -1px; }
.b { fill: #62b0e6; stroke: #3d90cc; stroke-width: .5; }
.s { stroke: #2b88d8; }
.ring { stroke: #62b0e6; stroke-width: 3; }
.hole { fill: #f3f2f1; }
.o { fill: #e08a3c; stroke: none; }
.e { fill: #3d9958; stroke: none; }
.r { fill: #d13438; stroke: none; }
.k { stroke: #222; }
.wl { stroke: #fff; }
.p { stroke: #a05cb5; }
.gallery .word { font-size: 9px; font-weight: 700; color: #2b88d8; }
.gallery .more { font-size: 9px; font-weight: 700; }
.wells { padding: 0 2px 0 3px; border: solid transparent; border-width: 0 3px 0 0; border-image: linear-gradient(#d0cecc 88%, #f3f2f1 88%) 1; }
.wells h3 { height: 18px; padding: 7px 0 0 4px; font-weight: 500; }
.well { display: flex; align-items: center; height: 16px; padding-left: 5px; border: 1px dashed #c8c6c4; background: #fff; }
.well.full { height: 20px; align-items: flex-start; }
.well.soft { color: #666; }
.well:has(.pill) { padding: 1px; }
.pill { display: flex; align-items: center; flex: 1; gap: 1px; height: 12px; padding: 0 1px 0 3px; border: 1px solid #d2d0ce; background: #e8e6e4; font-weight: 500; }
.pill svg:first-of-type { margin-left: auto; }
.cross { display: flex; align-items: center; justify-content: space-between; padding-left: 4px; height: 11px; font-weight: 500; }
.switch { display: flex; align-items: center; gap: 1px; height: 9px; padding: 0 2px; border: 1px solid #888; border-radius: 5px; font-size: 6px; color: #777; }
.switch input { appearance: none; width: 4px; height: 4px; border-radius: 50%; background: #333; }

.fields .pane-head { padding: 0 3px 0 5px; }
.fields .pane-head h2 { font-weight: 700; }
.fields .search { margin: 5px 1px 5px 3px; height: 15px; padding-left: 3px; border-color: #888; }
.entity { margin-bottom: 3px; color: #555; }
.entity h3, .entity label { display: flex; align-items: center; height: 13px; white-space: nowrap; }
.entity h3 { padding-left: 4px; gap: 1px; }
.entity h3 .tbl { position: relative; margin-right: 1px; }
.tbl svg { stroke: #333; }
.used .tbl::after { content: ""; position: absolute; right: -3px; bottom: -2px; width: 6px; height: 6px; border-radius: 50%; background: #f2c811; }
.entity label { padding-left: 12px; gap: 2px; }
.entity label > i:first-child { width: 8px; }
.entity .type { width: 10px; }
.entity label svg:nth-child(3), .entity .type { margin: 0 0 0 2px; }
.entity input { appearance: none; width: 7px; height: 7px; border: 1px solid #999; border-radius: 1px; background: #fff; position: relative; }
.entity input:checked { border-color: #f2c811; background: #f2c811; }
.entity input:checked::before { content: ""; position: absolute; left: 1px; top: 0; width: 4px; height: 2px; border: solid #555; border-width: 0 0 1px 1px; transform: rotate(-45deg); }

.status { height: 13px; padding-left: 2px; line-height: 12px; border-top: 1px solid #dddbd9; color: #555; }
```
FILE: charts.js
```js
const NS = "http://www.w3.org/2000/svg";
function add(parent, tag, attrs, text) {
  const el = document.createElementNS(NS, tag);
  for (const key in attrs) el.setAttribute(key, attrs[key]);
  if (text) el.textContent = text;
  parent.appendChild(el);
}

// Column chart: [category, total height, highlighted height]
const bars = document.getElementById("bars");
const categories = [
  ["Touring Bikes", 228, 0], ["Road Bikes", 191, 74], ["Mountain Bikes", 177, 54], ["Mountain Frames", 57, 27],
  ["Road Frames", 26, 3], ["Touring Frames", 21, 0], ["Jerseys", 9, 3], ["Vests", 5, 3], ["Cranksets", 5, 4],
  ["Shorts", 4, 3], ["Pedals", 3, 3], ["Helmets", 3, 3], ["Bike Racks", 3, 3], ["Hydration Packs", 3, 3],
  ["Bottom Brackets", 3, 3], ["Derailleurs", 3, 3], ["Handlebars", 3, 3], ["Saddles", 3, 3], ["Gloves", 3, 3],
  ["Brakes", 3, 3], ["Socks", 3, 3], ["Caps", 3, 3], ["Cleaners", 3, 3], ["Bottles and Cages", 3, 3],
  ["Chains", 3, 3], ["Tires and Tubes", 2, 0]
];
[["$0.2M", 167], ["$0.1M", 271], ["$0.0M", 375]].forEach(([label, y]) => {
  add(bars, "path", { class: "grid-line", d: `M155 ${y}H738` });
  add(bars, "text", { class: "tick", x: 147, y: y + 5 }, label);
});
categories.forEach(([name, total, lit], i) => {
  const x = 165 + i * 22;
  add(bars, "rect", { x, y: 375 - total, width: 18, height: total, fill: "#a0d1ff", stroke: "none" });
  add(bars, "rect", { x, y: 375 - lit, width: 18, height: lit, fill: "#118dff", stroke: "none" });
  add(bars, "text", { class: "tick", transform: `translate(${x + 5} 389) rotate(-35)` }, name);
});
add(bars, "text", { class: "axis dark", x: 432, y: 478 }, "类别");
add(bars, "text", { class: "axis dark", transform: "translate(98 262) rotate(-90)" }, "收入");

// Pie chart: [end angle, colour, highlighted radius]
const pie = document.getElementById("pie");
const slices = [
  [43, "#118dff", 8], [83, "#12239e", 8], [121, "#e66c37", 39], [158, "#6b007b", 28], [180, "#e044a7", 42],
  [200, "#744ec2", 6], [222, "#d9b300", 8], [237, "#d64550", 32], [252, "#197278", 36], [264, "#1aab40", 10],
  [273, "#15c6f4", 14], [282, "#4092ff", 10], [291, "#ffa058", 12], [299, "#be5dc9", 8], [310, "#f472d0", 8],
  [318, "#b5a1ff", 12], [324, "#c4a200", 38], [332, "#ff8080", 14], [339, "#00dbbc", 42], [343, "#5bd667", 20],
  [348, "#0091d5", 47], [353, "#ff6b18", 54], [357, "#e044a7", 30], [360, "#744ec2", 40]
];
function wedge(from, to, r) {
  const at = a => `${(292 + r * Math.sin(a * Math.PI / 180)).toFixed(1)} ${(255 - r * Math.cos(a * Math.PI / 180)).toFixed(1)}`;
  return `M292 255L${at(from)}A${r} ${r} 0 0 1 ${at(to)}z`;
}
let start = 0;
slices.forEach(([end, fill]) => {
  add(pie, "path", { d: wedge(start, end, 113), fill, "fill-opacity": .4, stroke: "none" });
  start = end;
});
start = 0;
slices.forEach(([end, fill, r]) => {
  add(pie, "path", { d: wedge(start, end, r), fill, stroke: "none" });
  start = end;
});
[
  [358, 142, "(0%)", "start", "M333 148l8-10h12"], [424, 203, "14 (0.67%)", "start", "M396 197h24"],
  [434, 288, "78 (3.74%)", "start", "M404 277l12 5h14"], [392, 358, "53 (2.54%)", "start", "M362 345l10 8h15"],
  [336, 386, "47 (2.25%)", "start", "M313 369l5 11h14"], [254, 385, "12 (0.57%)", "end", "M273 369l-4 11h-12"],
  [202, 362, "9 (0.43%)", "end", "M232 352l-6 7h-20"], [180, 343, "26 (1.25%)", "end", "M207 330l-10 8h-13"],
  [162, 318, "26 (1.25%)", "end", "M187 304l-8 9h-13"], [151, 292, "6 (0.29%)", "end", "M178 280l-10 7h-13"],
  [148, 268, "5 (0.24%)", "end", "M177 261h-25"], [148, 246, "8 (0.38%)", "end", "M177 243h-25"],
  [152, 224, "6 (0.29%)", "end", "M181 224l-25-4"], [159, 205, "8 (0.38%)", "end", "M187 206l-24-5"],
  [172, 187, "1 (0.05%)", "end", "M199 190l-10-7h-12"], [188, 168, "7 (0.34%)", "end", "M215 173l-8-9h-14"],
  [202, 150, "(0%)", "end", "M227 164l-8-17h-12"], [254, 144, "(0.48%)", "end", "M262 146l-3-6"],
  [255, 126, "10", "end", "M283 142l-5-17h-18"]
].forEach(([x, y, label, anchor, d]) => {
  add(pie, "path", { class: "leader", d });
  add(pie, "text", { class: "callout", x, y, "text-anchor": anchor }, label);
});

const legend = document.getElementById("legend");
[
  ["Touring Bikes", "#118dff"], ["Jerseys", "#12239e"], ["Road Bikes", "#e66c37"], ["Mountain Bikes", "#6b007b"],
  ["Mountain Frames", "#e044a7"], ["Helmets", "#744ec2"], ["Vests", "#d9b300"], ["Pedals", "#d64550"], ["Shorts", "#197278"]
].forEach(([name, colour]) => {
  const li = document.createElement("li");
  li.textContent = name;
  li.style.setProperty("--c", colour);
  legend.appendChild(li);
});
```
